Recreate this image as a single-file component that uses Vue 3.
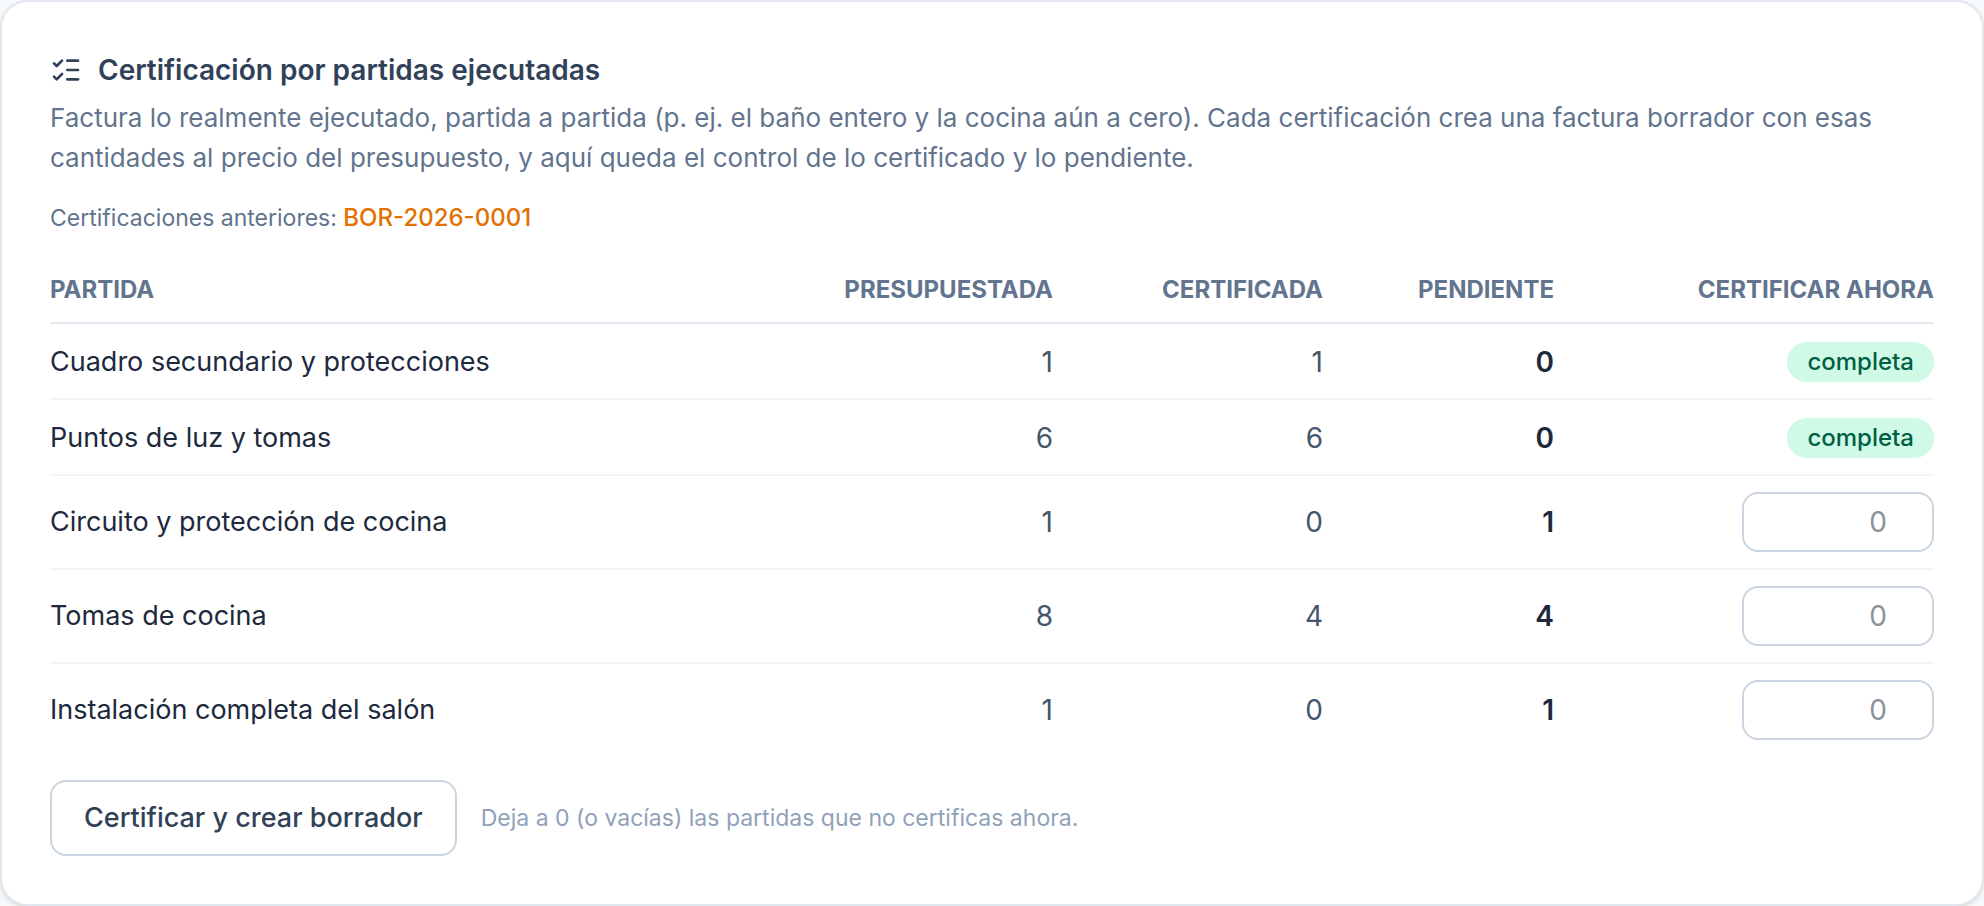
<script setup>
import { ref } from 'vue'

const partidas = ref([
  { id: 1, nombre: 'Cuadro secundario y protecciones', presupuestada: 1, certificada: 1, ahora: '' },
  { id: 2, nombre: 'Puntos de luz y tomas', presupuestada: 6, certificada: 6, ahora: '' },
  { id: 3, nombre: 'Circuito y protección de cocina', presupuestada: 1, certificada: 0, ahora: '' },
  { id: 4, nombre: 'Tomas de cocina', presupuestada: 8, certificada: 4, ahora: '' },
  { id: 5, nombre: 'Instalación completa del salón', presupuestada: 1, certificada: 0, ahora: '' },
])

const pendiente = (p) => p.presupuestada - p.certificada
</script>

<template>
  <section class="card" aria-labelledby="titulo">
    <h2 id="titulo" class="title">
      <svg class="title-icon" viewBox="0 0 24 24" aria-hidden="true">
        <path d="M13 5h8" />
        <path d="M13 12h8" />
        <path d="M13 19h8" />
        <path d="m3 17 2 2 4-4" />
        <path d="m3 7 2 2 4-4" />
      </svg>
      Certificación por partidas ejecutadas
    </h2>
    <p class="description">
      Factura lo realmente ejecutado, partida a partida (p. ej. el baño entero y la cocina aún a cero). Cada
      certificación crea una factura borrador con esas cantidades al precio del presupuesto, y aquí queda el control de
      lo certificado y lo pendiente.
    </p>
    <p class="previous">Certificaciones anteriores: <a href="#BOR-2026-0001">BOR-2026-0001</a></p>

    <form @submit.prevent>
      <table class="table">
        <colgroup>
          <col />
          <col class="col-wide" />
          <col class="col-wide" />
          <col class="col-pending" />
          <col class="col-now" />
        </colgroup>
        <thead>
          <tr>
            <th scope="col">Partida</th>
            <th scope="col" class="num">Presupuestada</th>
            <th scope="col" class="num">Certificada</th>
            <th scope="col" class="num">Pendiente</th>
            <th scope="col" class="num">Certificar ahora</th>
          </tr>
        </thead>
        <tbody>
          <tr v-for="p in partidas" :key="p.id" :class="{ done: pendiente(p) === 0 }">
            <td class="name"><label :for="`partida-${p.id}`">{{ p.nombre }}</label></td>
            <td class="num">{{ p.presupuestada }}</td>
            <td class="num">{{ p.certificada }}</td>
            <td class="num pending">{{ pendiente(p) }}</td>
            <td class="num action">
              <output v-if="pendiente(p) === 0" :id="`partida-${p.id}`" class="badge">completa</output>
              <input
                v-else
                :id="`partida-${p.id}`"
                v-model="p.ahora"
                class="quantity"
                type="number"
                min="0"
                :max="pendiente(p)"
                placeholder="0"
              />
            </td>
          </tr>
        </tbody>
      </table>

      <div class="footer">
        <button type="submit" class="submit">Certificar y crear borrador</button>
        <span class="hint">Deja a 0 (o vacías) las partidas que no certificas ahora.</span>
      </div>
    </form>
  </section>
</template>

<style>
body {
  background: #f8fafc;
}
</style>

<style scoped>
.card {
  box-sizing: border-box;
  padding: 48px;
  border: 2px solid #e2e8f0;
  border-radius: 28px;
  background: #fff;
  box-shadow: 0 2px 6px rgba(0, 0, 0, 0.1), 0 2px 4px -2px rgba(0, 0, 0, 0.1);
  color: #1d293d;
  font-family: Inter, "Liberation Sans", sans-serif;
  font-size: 27px;
  line-height: 40px;
}

.title {
  display: flex;
  align-items: center;
  gap: 16px;
  margin: 0;
  color: #314158;
  font-size: 28px;
  font-weight: 600;
}

.title-icon {
  flex: none;
  width: 32px;
  height: 32px;
  fill: none;
  stroke: currentColor;
  stroke-width: 2;
  stroke-linecap: round;
  stroke-linejoin: round;
}

.description {
  margin: 8px 0 0;
  color: #62748e;
  font-size: 26px;
}

.previous {
  margin: 24px 0;
  color: #62748e;
  font-size: 23px;
  line-height: 32px;
}

.previous a {
  color: #e17100;
  font-size: 24px;
  font-weight: 500;
  text-decoration: none;
}

.table {
  width: 100%;
  border-collapse: separate;
  border-spacing: 0;
  table-layout: fixed;
}

.col-wide {
  width: 270px;
}

.col-pending {
  width: 231px;
}

.col-now {
  width: 380px;
}

th {
  padding: 16px 0;
  border-bottom: 2px solid #e2e8f0;
  color: #62748e;
  font-size: 24px;
  font-weight: 700;
  line-height: 32px;
  text-align: left;
  text-transform: uppercase;
  white-space: nowrap;
}

td {
  padding: 16px 0;
  border-bottom: 2px solid #f1f5f9;
  color: #45556c;
  vertical-align: middle;
}

.done td {
  padding-top: 18px;
}

tbody tr:last-child td {
  border-bottom: 0;
}

.num {
  text-align: right;
}

td.num {
  font-size: 28px;
}

td.name {
  color: #1d293d;
}

td.pending {
  color: #1d293d;
  font-weight: 600;
}

td.action {
  line-height: 0;
}

.badge {
  display: inline-block;
  padding: 4px 20px;
  border-radius: 20px;
  background: #d0fae5;
  color: #006045;
  font-size: 24px;
  font-weight: 500;
  line-height: 32px;
  vertical-align: middle;
}

.quantity {
  box-sizing: border-box;
  width: 192px;
  height: 60px;
  padding: 8px 30px 8px 20px;
  border: 2px solid #cad5e2;
  border-radius: 16px;
  background: #fff;
  color: #1d293d;
  font: inherit;
  line-height: 40px;
  text-align: right;
  vertical-align: middle;
}

.quantity::placeholder {
  color: #8e9199;
  opacity: 1;
}

.footer {
  display: flex;
  align-items: center;
  gap: 24px;
  margin-top: 24px;
}

.submit {
  padding: 16px 32px;
  border: 2px solid #cad5e2;
  border-radius: 16px;
  background: #fff;
  color: #314158;
  font: inherit;
  font-weight: 500;
  cursor: pointer;
}

.hint {
  color: #90a1b9;
  font-size: 23px;
  line-height: 32px;
}
</style>
